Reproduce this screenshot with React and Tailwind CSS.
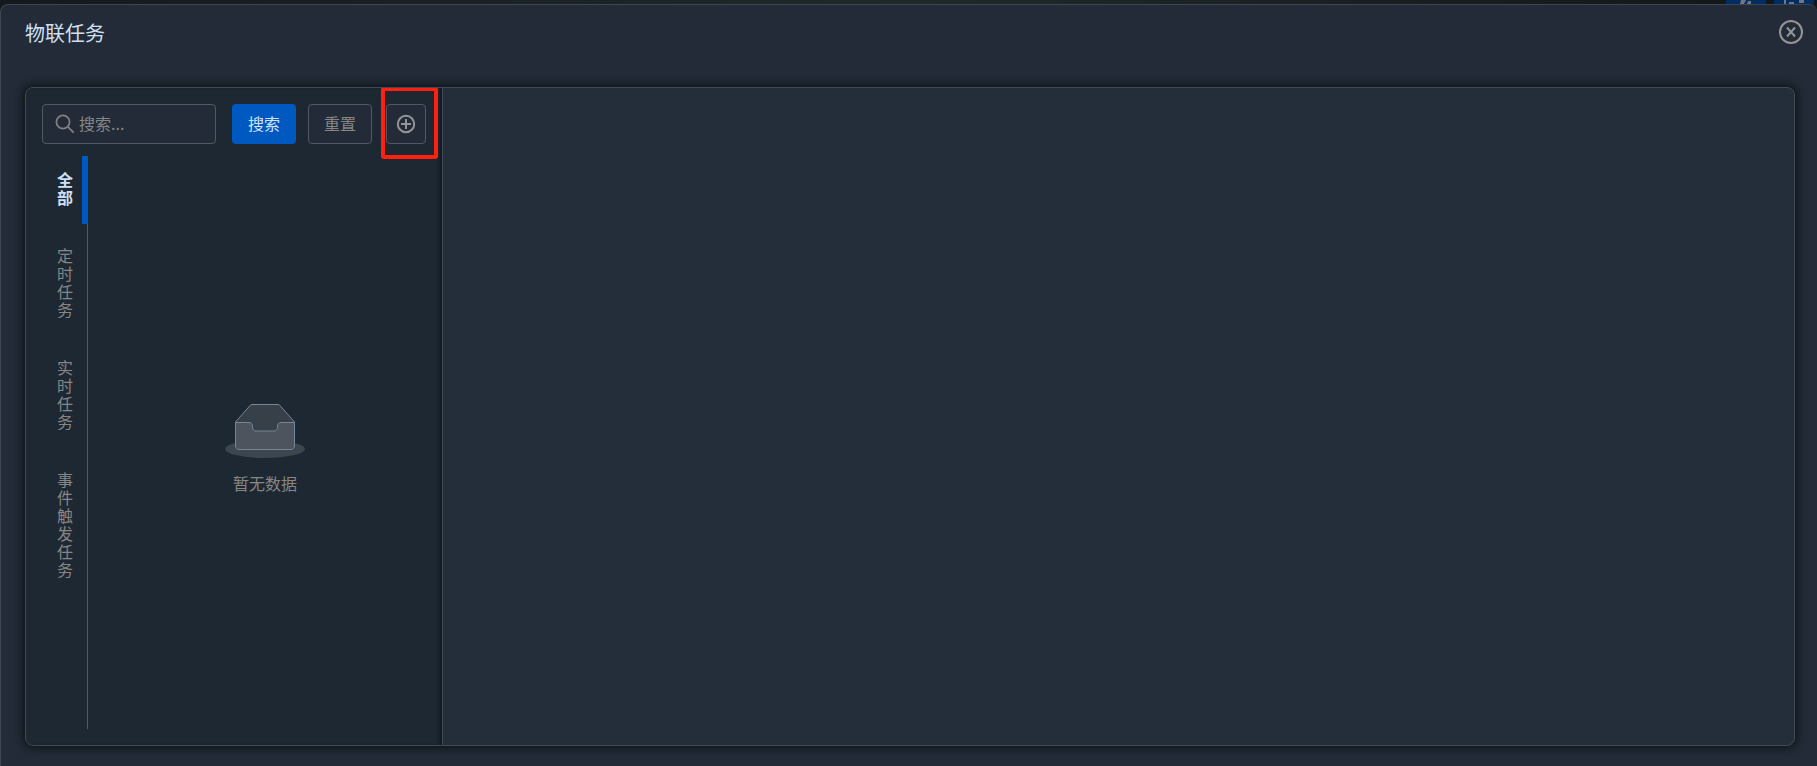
import React, { useState } from 'react';

const tabs = ['全部', '定时任务', '实时任务', '事件触发任务'];

const SearchIcon = () => (
  <svg className="w-5 h-5 shrink-0" viewBox="0 0 20 20" fill="none" stroke="#808080" strokeWidth="1.8" aria-hidden="true">
    <circle cx="8" cy="8" r="6.600" />
    <path d="M12.700 12.700l6 6" />
  </svg>
);

const PlusIcon = () => (
  <svg className="w-5 h-5" viewBox="0 0 20 20" fill="none" stroke="#949494" strokeWidth="2" aria-hidden="true">
    <circle cx="10" cy="10" r="8.2" />
    <path d="M10 5v10M5 10h10" />
  </svg>
);

const CloseIcon = () => (
  <svg className="w-6 h-6" viewBox="0 0 24 24" fill="none" stroke="#949494" strokeWidth="2" aria-hidden="true">
    <circle cx="12" cy="12" r="11" />
    <path d="M8 7.5l8 9M16 7.5l-8 9" />
  </svg>
);

const EmptyIcon = () => (
  <svg className="w-20 h-14" viewBox="0 0 80 56" aria-hidden="true">
    <ellipse cx="40" cy="46" rx="40" ry="9" fill="#3b464f" />
    <path d="M10.5 19L26 1.5h28L69.5 19v10h-59z" fill="#373f48" stroke="#73869b" />
    <path
      d="M10.500 19.500H24c2 0 3.500 1.500 3.500 3.500v1.500c0 2 1.500 3.500 3.500 3.500h18c2 0 3.500-1.500 3.500-3.500V23c0-2 1.500-3.500 3.500-3.500h13.500V43c0 2-1.500 3.500-3.500 3.500H14c-2 0-3.500-1.500-3.500-3.500z"
      fill="#4d545e"
      stroke="#73869b"
    />
  </svg>
);

// sliver of the map and its toolbar above the dialog
const MapStrip = () => (
  <div className="flex h-1 shrink-0 justify-end gap-2 bg-linear-to-r from-[#14191d] via-[#20282a] to-[#121619] pr-[3px]">
    <div className="flex w-10 justify-center bg-[#002d62]">
      <svg className="h-1 w-3" viewBox="0 0 12 4" fill="#6f7780" aria-hidden="true">
        <path d="M1 0h5l-2 4H0zM8 1h3v3H7z" />
      </svg>
    </div>
    <div className="flex w-10 justify-center bg-[#002d62]">
      <svg className="h-1 w-5" viewBox="0 0 20 4" fill="#6f7780" aria-hidden="true">
        <path d="M0 0h2v4H0zM5 2h5v2H5zM15 0h5v3h-5z" />
      </svg>
    </div>
  </div>
);

const App = () => {
  const [active, setActive] = useState('全部');
  const [keyword, setKeyword] = useState('');

  return (
    <div className="flex h-screen flex-col overflow-hidden bg-[#14181a] font-['Noto_Sans_CJK_SC',sans-serif] text-base text-[#868686]">
      <MapStrip />
      <div className="flex min-h-0 flex-1 flex-col rounded-t-lg border-t border-l border-[#3d474f] bg-[#222b37] pr-[22px] pb-5 pl-6">
        <header className="flex h-[82px] shrink-0 items-start justify-between pt-[15px]">
          <h1 className="-mt-px text-xl leading-7 text-[#cfe0f5]">物联任务</h1>
          <button type="button" aria-label="关闭" className="-mr-2">
            <CloseIcon />
          </button>
        </header>

        <main className="flex min-h-0 flex-1 overflow-hidden rounded-lg border border-[#414b54] bg-[#242e3a] shadow-[0_0_8px_2px_#0d1216]">
          <section className="flex w-[417px] shrink-0 flex-col border-r border-[#414b54] bg-[#1e2833] p-4 shadow-[inset_-4px_0_4px_-2px_#10161d]">
            <form className="flex h-10 shrink-0" onSubmit={(e) => e.preventDefault()}>
              <label className="mr-4 flex w-[174px] items-center gap-1 rounded border border-[#505a66] bg-[#222b37] pl-3">
                <SearchIcon />
                <input
                  type="text"
                  aria-label="搜索"
                  placeholder="搜索..."
                  className="min-w-0 flex-1 bg-transparent pb-0.5 outline-none placeholder:text-[#868686]"
                  value={keyword}
                  onChange={(e) => setKeyword(e.target.value)}
                />
              </label>
              <button type="submit" className="mr-3 w-16 rounded bg-[#0059c1] pb-0.5 text-[#cfe0f5]">搜索</button>
              <button type="button" onClick={() => setKeyword('')} className="w-16 rounded border border-[#505a66] bg-[#222b37] pb-0.5">重置</button>
              <div className="relative ml-[14px] w-10">
                <button type="button" aria-label="新增" className="flex h-10 w-10 items-center justify-center rounded border border-[#505a66] bg-[#222b37]">
                  <PlusIcon />
                </button>
                <div className="pointer-events-none absolute -top-[17px] -left-[5px] h-[72px] w-[57px] rounded-[3px] border-4 border-[#ff2010]" />
              </div>
            </form>

            <div className="mt-3 flex min-h-0 flex-1">
              <nav className="flex w-[46px] shrink-0 flex-col gap-2 border-r border-[#505a66]">
                {tabs.map((tab) => (
                  <button
                    key={tab}
                    type="button"
                    onClick={() => setActive(tab)}
                    className={`-mr-px flex justify-end border-r-[6px] pt-[14px] pr-[9px] pb-[18px] leading-[18px] ${active === tab ? 'border-[#0059c1] font-bold text-[#cfe0f5]' : 'border-transparent'}`}
                  >
                    <span className="w-4 break-all">{tab}</span>
                  </button>
                ))}
              </nav>
              <div className="-mr-4 flex flex-1 flex-col items-center justify-center pt-3">
                <EmptyIcon />
                <p className="mt-3 leading-6">暂无数据</p>
              </div>
            </div>
          </section>
          <section className="flex-1" />
        </main>
      </div>
    </div>
  );
};

export default App;
